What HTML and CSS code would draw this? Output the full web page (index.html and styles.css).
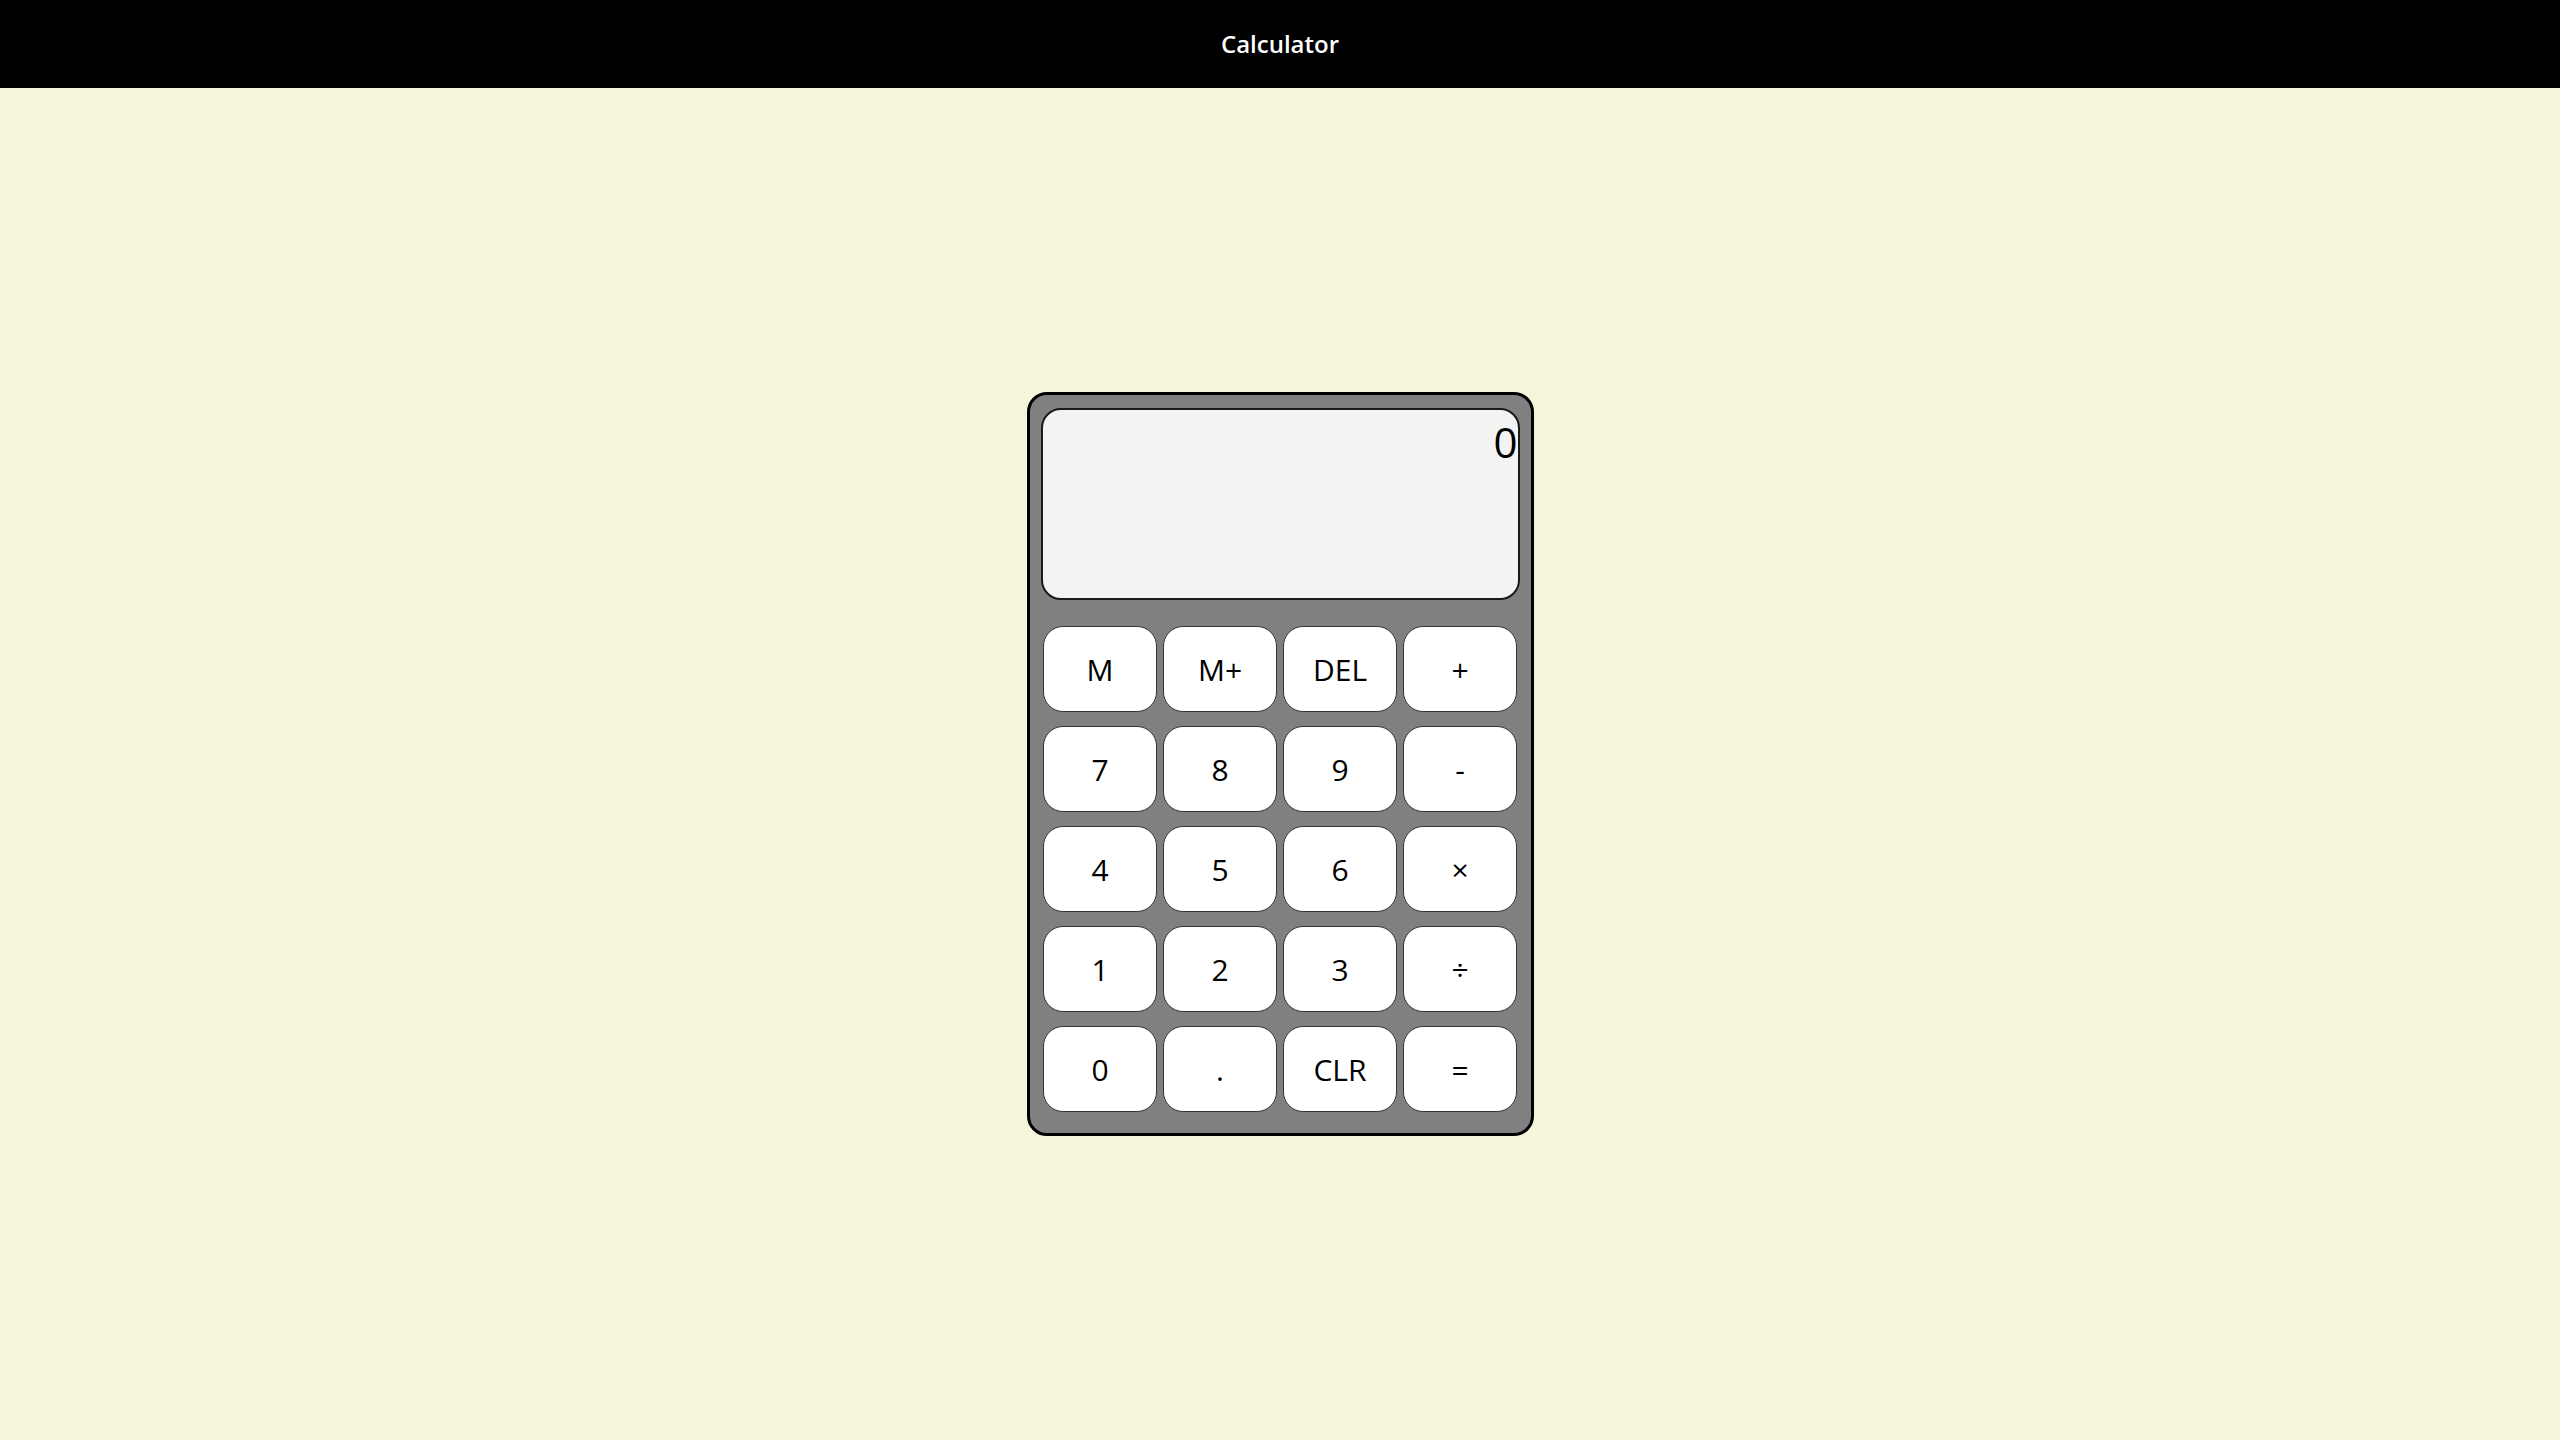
FILE: index.html
```html
<!DOCTYPE html>
<html lang="en">
<head>
<meta charset="utf-8">
<title>Calculator</title>
<link rel="stylesheet" href="styles.css">
</head>
<body>
<header class="topbar"><h1 class="title">Calculator</h1></header>
<main class="stage">
  <div class="calculator">
    <div class="screen">0</div>
    <div class="keys">
      <button class="key">M</button>
      <button class="key">M+</button>
      <button class="key">DEL</button>
      <button class="key">+</button>
      <button class="key">7</button>
      <button class="key">8</button>
      <button class="key">9</button>
      <button class="key">-</button>
      <button class="key">4</button>
      <button class="key">5</button>
      <button class="key">6</button>
      <button class="key">×</button>
      <button class="key">1</button>
      <button class="key">2</button>
      <button class="key">3</button>
      <button class="key">÷</button>
      <button class="key">0</button>
      <button class="key">.</button>
      <button class="key">CLR</button>
      <button class="key">=</button>
    </div>
  </div>
</main>
</body>
</html>
```
FILE: styles.css
```css
html, body {
  margin: 0;
  padding: 0;
}
body {
  background: #f5f5dc;
  font-family: "Open Sans", "Noto Sans", sans-serif;
  color: #000;
}
.topbar {
  height: 88px;
  background: #000;
  display: flex;
  align-items: center;
  justify-content: center;
}
.title {
  margin: 0;
  color: #fff;
  font-size: 24px;
  font-weight: 600;
  line-height: 1;
}
.stage {
  height: calc(100vh - 88px);
  display: flex;
  align-items: center;
  justify-content: center;
}
.calculator {
  width: 507px;
  box-sizing: border-box;
  border: 3px solid #000;
  border-radius: 20px;
  background: #808080;
  padding: 13px 11px 21px 11px;
}
.screen {
  height: 192px;
  box-sizing: border-box;
  border: 2px solid #1a1a1a;
  border-radius: 20px;
  background: #f3f3f3;
  text-align: right;
  font-size: 42px;
  line-height: normal;
  padding: 3px 0 0 0;
  overflow: hidden;
}
.keys {
  margin-top: 26px;
  display: grid;
  grid-template-columns: repeat(4, 114px);
  grid-auto-rows: 86px;
  gap: 14px 6px;
  justify-content: center;
}
.key {
  box-sizing: border-box;
  border: 1px solid #333;
  border-radius: 20px;
  background: #fff;
  color: #000;
  font-family: "Open Sans", "Noto Sans", sans-serif;
  font-size: 30px;
  padding: 0;
  margin: 0;
}
```
